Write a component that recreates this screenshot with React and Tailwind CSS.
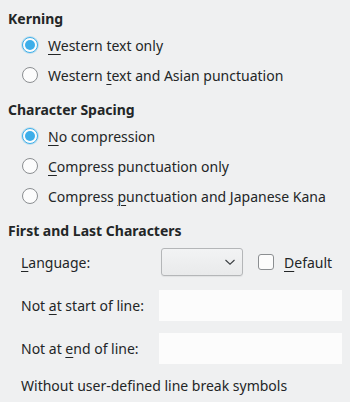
import React from "react";

function U({ children }) {
  return <span className="underline decoration-[1px] underline-offset-[3px]">{children}</span>;
}

function Radio({ checked, children }) {
  return (
    <div className="flex h-[30px] items-center pl-[22px]">
      {checked ? (
        <div className="flex h-4 w-4 items-center justify-center rounded-full border border-[#3daee9] bg-[#fcfcfc] shadow-[0_0_0_1px_rgba(61,174,233,0.25)]">
          <div className="h-[10px] w-[10px] rounded-full bg-[#3daee9]" />
        </div>
      ) : (
        <div className="h-4 w-4 rounded-full border border-[#8b8e91] bg-[#fcfcfc]" />
      )}
      <span className="ml-[10px]">{children}</span>
    </div>
  );
}

function Header({ children, className = "" }) {
  return (
    <div className={"flex h-5 items-center pl-2 font-bold " + className}>{children}</div>
  );
}

export default function App() {
  return (
    <div
      className="flex h-[402px] w-[350px] flex-col bg-[#eff0f1] pt-2 text-[14px] text-[#232627]"
      style={{ fontFamily: '"Noto Sans", sans-serif' }}
    >
      <Header>Kerning</Header>
      <div className="mt-[2px] flex flex-col">
        <Radio checked>
          <U>W</U>estern text only
        </Radio>
        <Radio>
          Western <U>t</U>ext and Asian punctuation
        </Radio>
      </div>
      <Header className="mt-[9px]">Character Spacing</Header>
      <div className="mt-[2px] flex flex-col">
        <Radio checked>
          <U>N</U>o compression
        </Radio>
        <Radio>
          <U>C</U>ompress punctuation only
        </Radio>
        <Radio>
          Compress <U>p</U>unctuation and Japanese Kana
        </Radio>
      </div>
      <Header className="mt-[9px]">First and Last Characters</Header>
      <div className="mt-2 flex h-7 items-center pl-[21px]">
        <div className="w-[140px]">
          <U>L</U>anguage:
        </div>
        <div className="flex h-7 w-[82px] items-center justify-end rounded-[3px] border border-[#b4b6b8] bg-gradient-to-b from-[#f2f3f4] to-[#e9eaeb] pr-[6px] shadow-[0_1px_1px_rgba(0,0,0,0.06)]">
          <svg width="12" height="8" viewBox="0 0 12 8" fill="none">
            <path d="M1.5 2 L6 6.2 L10.5 2" stroke="#3b3f42" strokeWidth="1.1" />
          </svg>
        </div>
        <div className="ml-[15px] h-4 w-4 rounded-[3px] border border-[#8b8e91] bg-[#fcfcfc]" />
        <span className="ml-[10px]">
          <U>D</U>efault
        </span>
      </div>
      <div className="mt-[14px] flex h-[31px] items-center pl-[21px]">
        <div className="w-[138px]">
          Not <U>a</U>t start of line:
        </div>
        <div className="h-[31px] w-[183px] bg-[#fcfcfc]" />
      </div>
      <div className="mt-3 flex h-[31px] items-center pl-[21px]">
        <div className="w-[138px]">
          Not at <U>e</U>nd of line:
        </div>
        <div className="h-[31px] w-[183px] bg-[#fcfcfc]" />
      </div>
      <div className="mt-[11px] flex h-5 items-center pl-[21px]">
        Without user-defined line break symbols
      </div>
    </div>
  );
}
